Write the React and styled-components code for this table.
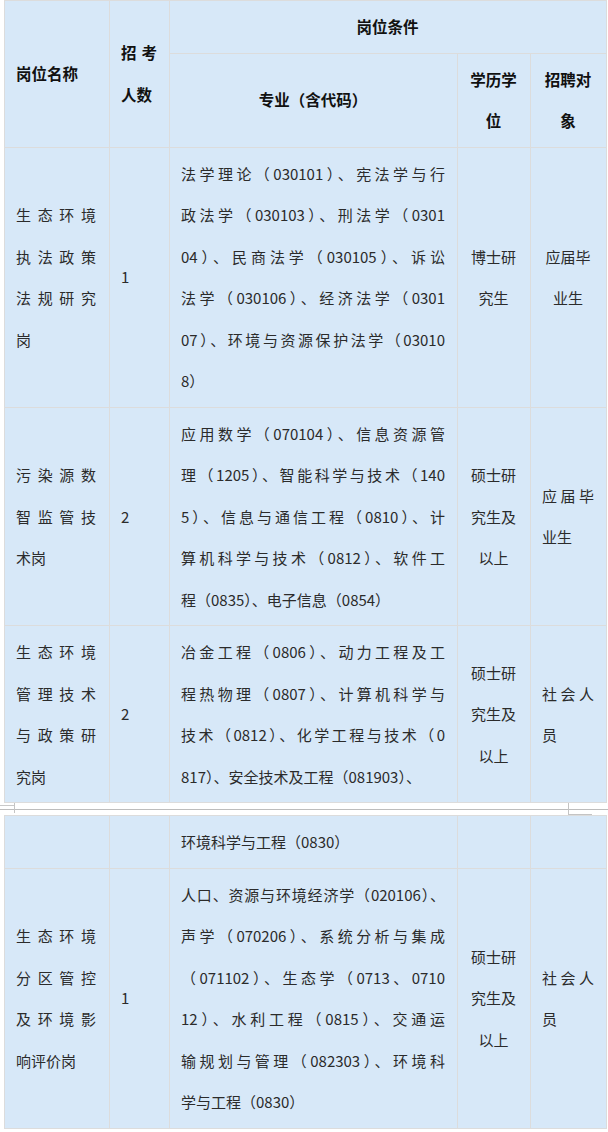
import React from 'react'
import styled, { createGlobalStyle } from 'styled-components'

const GlobalStyle = createGlobalStyle`
  html, body {
    margin: 0;
    padding: 0;
    background: #ffffff;
  }
  body {
    font-family: "Noto Sans CJK SC", "Noto Sans", sans-serif;
  }
`

const Page = styled.div`
  width: 608px;
  height: 1132px;
  overflow: hidden;
  background: #fff;
`

const Table = styled.table`
  margin-left: 4px;
  width: 602px;
  border-collapse: collapse;
  table-layout: fixed;
  color: #2b2b2b;
  font-size: 15px;
`

const Cell = styled.td`
  background: #d7e8f8;
  border: 1px solid #dcdcdc;
  padding: 5px ${p => p.$pr || 12}px 5px 11px;
  vertical-align: middle;
  text-align: ${p => p.$align || 'left'};
  line-height: 41.5px;
`

const Head = styled(Cell).attrs({ as: 'th' })`
  color: #111;
  font-weight: 700;
  font-size: 15.5px;
`

const Line = styled.div`
  white-space: nowrap;
  text-align: ${p => (p.$j ? 'justify' : 'inherit')};
  text-align-last: ${p => (p.$j ? 'justify' : 'auto')};
`

const Break = styled.div`
  position: relative;
  height: 12px;
  background: #fff;

  &::before {
    content: '';
    position: absolute;
    left: 0;
    right: 0;
    top: 6px;
    height: 1px;
    background: #bdbdbd;
  }
  &::after {
    content: '';
    position: absolute;
    left: 0;
    width: 14px;
    top: 2px;
    height: 1px;
    background: #c9c9c9;
  }
`

const Tick = styled.span`
  position: absolute;
  left: ${p => p.$x}px;
  top: 0;
  width: 1px;
  height: ${p => p.$h}px;
  background: #c4c4c4;
`

const Dash = styled.span`
  position: absolute;
  left: ${p => p.$x}px;
  top: ${p => p.$y}px;
  width: ${p => p.$w}px;
  height: 1px;
  background: #c4c4c4;
`

// lines: last line is not spread, the others are spread across the cell
const Lines = ({ lines, spread = true }) =>
  lines.map((t, i) => (
    <Line key={i} $j={spread && i < lines.length - 1}>
      {t}
    </Line>
  ))

const Cols = () => (
  <colgroup>
    <col style={{ width: 105 }} />
    <col style={{ width: 60 }} />
    <col style={{ width: 288 }} />
    <col style={{ width: 73 }} />
    <col style={{ width: 76 }} />
  </colgroup>
)

const firstRows = [
  {
    name: ['生态环境', '执法政策', '法规研究', '岗'],
    count: '1',
    major: [
      '法学理论（030101）、宪法学与行',
      '政法学（030103）、刑法学（0301',
      '04）、民商法学（030105）、诉讼',
      '法学（030106）、经济法学（0301',
      '07）、环境与资源保护法学（03010',
      '8）',
    ],
    degree: ['博士研', '究生'],
    target: ['应届毕', '业生'],
    targetAlign: 'center',
  },
  {
    name: ['污染源数', '智监管技', '术岗'],
    count: '2',
    major: [
      '应用数学（070104）、信息资源管',
      '理（1205）、智能科学与技术（140',
      '5）、信息与通信工程（0810）、计',
      '算机科学与技术（0812）、软件工',
      '程（0835）、电子信息（0854）',
    ],
    degree: ['硕士研', '究生及', '以上'],
    target: ['应届毕', '业生'],
  },
  {
    name: ['生态环境', '管理技术', '与政策研', '究岗'],
    count: '2',
    major: [
      '冶金工程（0806）、动力工程及工',
      '程热物理（0807）、计算机科学与',
      '技术（0812）、化学工程与技术（0',
      '817）、安全技术及工程（081903）、',
    ],
    degree: ['硕士研', '究生及', '以上'],
    target: ['社会人', '员'],
  },
]

const secondRows = [
  {
    name: [],
    count: '',
    major: ['环境科学与工程（0830）'],
    degree: [],
    target: [],
  },
  {
    name: ['生态环境', '分区管控', '及环境影', '响评价岗'],
    count: '1',
    major: [
      '人口、资源与环境经济学（020106）、',
      '声学（070206）、系统分析与集成',
      '（071102）、生态学（0713、0710',
      '12）、水利工程（0815）、交通运',
      '输规划与管理（082303）、环境科',
      '学与工程（0830）',
    ],
    degree: ['硕士研', '究生及', '以上'],
    target: ['社会人', '员'],
  },
]

const Row = ({ row }) => (
  <tr>
    <Cell $pr={13}>
      <Lines lines={row.name} />
    </Cell>
    <Cell>{row.count}</Cell>
    <Cell>
      <Lines lines={row.major} />
    </Cell>
    <Cell $align="center">
      <Lines lines={row.degree} spread={false} />
    </Cell>
    <Cell $align={row.targetAlign || 'left'}>
      <Lines lines={row.target} spread={row.targetAlign !== 'center'} />
    </Cell>
  </tr>
)

const App = () => (
  <Page>
    <GlobalStyle />
    <Table>
      <Cols />
      <thead>
        <tr>
          <Head rowSpan={2}>岗位名称</Head>
          <Head rowSpan={2}>
            <Lines lines={['招考', '人数']} />
          </Head>
          <Head colSpan={3} $align="center">岗位条件</Head>
        </tr>
        <tr>
          <Head $align="center">专业（含代码）</Head>
          <Head $align="center">
            <Lines lines={['学历学', '位']} spread={false} />
          </Head>
          <Head $align="center">
            <Lines lines={['招聘对', '象']} spread={false} />
          </Head>
        </tr>
      </thead>
      <tbody>
        {firstRows.map((r, i) => (
          <Row key={i} row={r} />
        ))}
      </tbody>
    </Table>

    <Break>
      <Tick $x={14} $h={10} />
      <Tick $x={568} $h={11} />
      <Dash $x={568} $y={11} $w={24} />
    </Break>

    <Table>
      <Cols />
      <tbody>
        {secondRows.map((r, i) => (
          <Row key={i} row={r} />
        ))}
      </tbody>
    </Table>
  </Page>
)

export default App
